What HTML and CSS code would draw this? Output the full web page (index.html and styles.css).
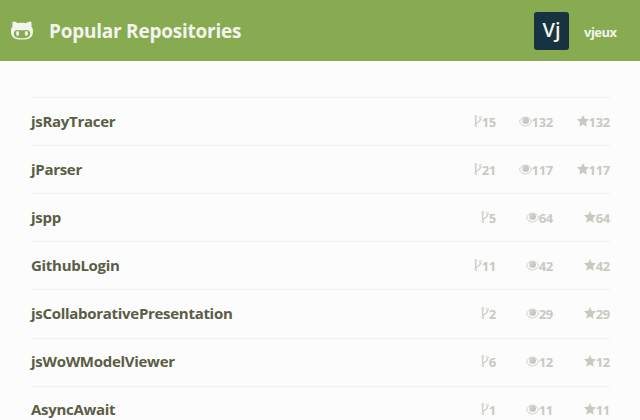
FILE: index.html
```html
<!DOCTYPE html>
<html lang="en">
<head>
<meta charset="utf-8">
<title>Popular Repositories</title>
<link rel="stylesheet" href="styles.css">
</head>
<body>
<svg class="sprite" aria-hidden="true">
  <symbol id="fork" viewBox="0 0 8 12"><g fill="none" stroke="currentColor" stroke-width="1"><circle cx="1.700" cy="1.500" r="1"/><circle cx="1.700" cy="10.500" r="1"/><circle cx="6.500" cy="2.500" r="1"/><path stroke-width="1.300" d="M1.700 2.500v7M6.500 3.500c0 2.500-1 3-2.300 3.500S1.900 8 1.800 9.300"/></g></symbol>
  <symbol id="eye" viewBox="0 0 13 11"><path d="M.5 5.500C2 2.400 4 1 6.500 1s4.500 1.400 6 4.500C11 8.600 9 10 6.500 10S2 8.600.5 5.500z" fill="none" stroke="currentColor" stroke-width=".9"/><circle cx="6.700" cy="4.700" r="3.300" fill="currentColor"/><path d="M4.900 4.800a1.800 1.800 0 0 1 1.700-1.800" fill="none" stroke="#fcfcfc" stroke-width=".4"/></symbol>
  <symbol id="star" viewBox="0 0 12 12"><path d="M6 0l1.800 3.800 4.200.5-3.100 2.900.8 4.600L6 9.600l-3.700 2.200.8-4.600L0 4.300l4.200-.5z" fill="currentColor"/></symbol>
</svg>
<header class="header">
  <svg class="logo" viewBox="0 0 22 19"><path fill="currentColor" fill-rule="evenodd" d="M2 .4C3.800.3 5.500 1.100 6.900 2.200c2.700-.5 5.500-.5 8.200 0C16.500 1.100 18.200.3 20 .4c.7 1.800.7 3.400.3 4.900C21.500 6.700 22 8.300 22 10.200c0 6.300-3.900 8.400-11 8.400S0 16.500 0 10.200c0-1.900.5-3.500 1.700-4.900C1.300 3.800 1.300 2.200 2 .4zM6.500 8.900C4 8.800 2.800 10.500 2.800 12.500c0 3.900 3.400 4.700 8.200 4.700s8.200-.8 8.200-4.700c0-2-1.200-3.700-3.700-3.600-3 .3-6 .3-9 0z"/><ellipse cx="6.600" cy="12.500" rx="1.600" ry="2.400" fill="currentColor"/><ellipse cx="15.400" cy="12.500" rx="1.600" ry="2.400" fill="currentColor"/></svg>
  <h1 class="title">Popular Repositories</h1>
  <div class="avatar">Vj</div>
  <span class="username">vjeux</span>
</header>
<ul class="repos">
  <li class="repo"><span class="name">jsRayTracer</span><span class="stat"><svg class="fork"><use href="#fork"/></svg>15</span><span class="stat"><svg class="eye"><use href="#eye"/></svg>132</span><span class="stat"><svg class="star"><use href="#star"/></svg>132</span></li>
  <li class="repo"><span class="name">jParser</span><span class="stat"><svg class="fork"><use href="#fork"/></svg>21</span><span class="stat"><svg class="eye"><use href="#eye"/></svg>117</span><span class="stat"><svg class="star"><use href="#star"/></svg>117</span></li>
  <li class="repo"><span class="name">jspp</span><span class="stat"><svg class="fork"><use href="#fork"/></svg>5</span><span class="stat"><svg class="eye"><use href="#eye"/></svg>64</span><span class="stat"><svg class="star"><use href="#star"/></svg>64</span></li>
  <li class="repo"><span class="name">GithubLogin</span><span class="stat"><svg class="fork"><use href="#fork"/></svg>11</span><span class="stat"><svg class="eye"><use href="#eye"/></svg>42</span><span class="stat"><svg class="star"><use href="#star"/></svg>42</span></li>
  <li class="repo"><span class="name">jsCollaborativePresentation</span><span class="stat"><svg class="fork"><use href="#fork"/></svg>2</span><span class="stat"><svg class="eye"><use href="#eye"/></svg>29</span><span class="stat"><svg class="star"><use href="#star"/></svg>29</span></li>
  <li class="repo"><span class="name">jsWoWModelViewer</span><span class="stat"><svg class="fork"><use href="#fork"/></svg>6</span><span class="stat"><svg class="eye"><use href="#eye"/></svg>12</span><span class="stat"><svg class="star"><use href="#star"/></svg>12</span></li>
  <li class="repo"><span class="name">AsyncAwait</span><span class="stat"><svg class="fork"><use href="#fork"/></svg>1</span><span class="stat"><svg class="eye"><use href="#eye"/></svg>11</span><span class="stat"><svg class="star"><use href="#star"/></svg>11</span></li>
</ul>
</body>
</html>
```
FILE: styles.css
```css
* { box-sizing: border-box; }
body {
  margin: 0;
  height: 420px;
  overflow: hidden;
  background: #fcfcfc;
  font-family: "Open Sans", sans-serif;
}
.sprite { display: none; }
.header {
  display: flex;
  align-items: center;
  height: 61px;
  padding: 0 23px 0 11px;
  background: #88ab51;
  color: #f3f4ed;
}
.logo { width: 22px; height: 19px; }
.title {
  flex: 1;
  margin: 0 0 0 16px;
  font-size: 19px;
  line-height: 28px;
  font-weight: 700;
  letter-spacing: -0.24px;
}
.avatar {
  width: 35px;
  height: 38px;
  margin: 0 15px 0 0;
  border-radius: 3px;
  background: #173240;
  text-align: center;
  font-size: 20px;
  line-height: 36px;
  font-weight: 600;
}
.username {
  width: 33px;
  padding-top: 3px;
  font-size: 13px;
  line-height: 18px;
  font-weight: 700;
  letter-spacing: -0.5px;
}
.repos {
  margin: 36px 30px 0 31px;
  padding: 0;
  list-style: none;
}
.repo {
  display: flex;
  align-items: flex-start;
  height: 48px;
  border-top: 1px solid #f0f0ed;
}
/* The lower rules sit one pixel down; the row text keeps its 48px rhythm. */
.repo:nth-child(5) { height: 49px; }
.repo:nth-child(n+6) .name { padding-top: 12px; }
.repo:nth-child(n+6) .stat { padding-top: 14px; }
.name {
  flex: 1;
  padding-top: 13px;
  color: #5b5d45;
  font-size: 15px;
  line-height: 20px;
  font-weight: 700;
  letter-spacing: -0.29px;
}
.stat {
  display: flex;
  justify-content: flex-end;
  align-items: center;
  width: 57px;
  padding-top: 15px;
  color: #c8cac2;
  font-size: 13px;
  line-height: 18px;
  font-weight: 700;
  letter-spacing: -0.3px;
}
.stat svg { position: relative; top: -1px; }
.fork { width: 8px; height: 12px; }
.eye { width: 13px; height: 11px; }
.star { width: 12px; height: 12px; }
```
